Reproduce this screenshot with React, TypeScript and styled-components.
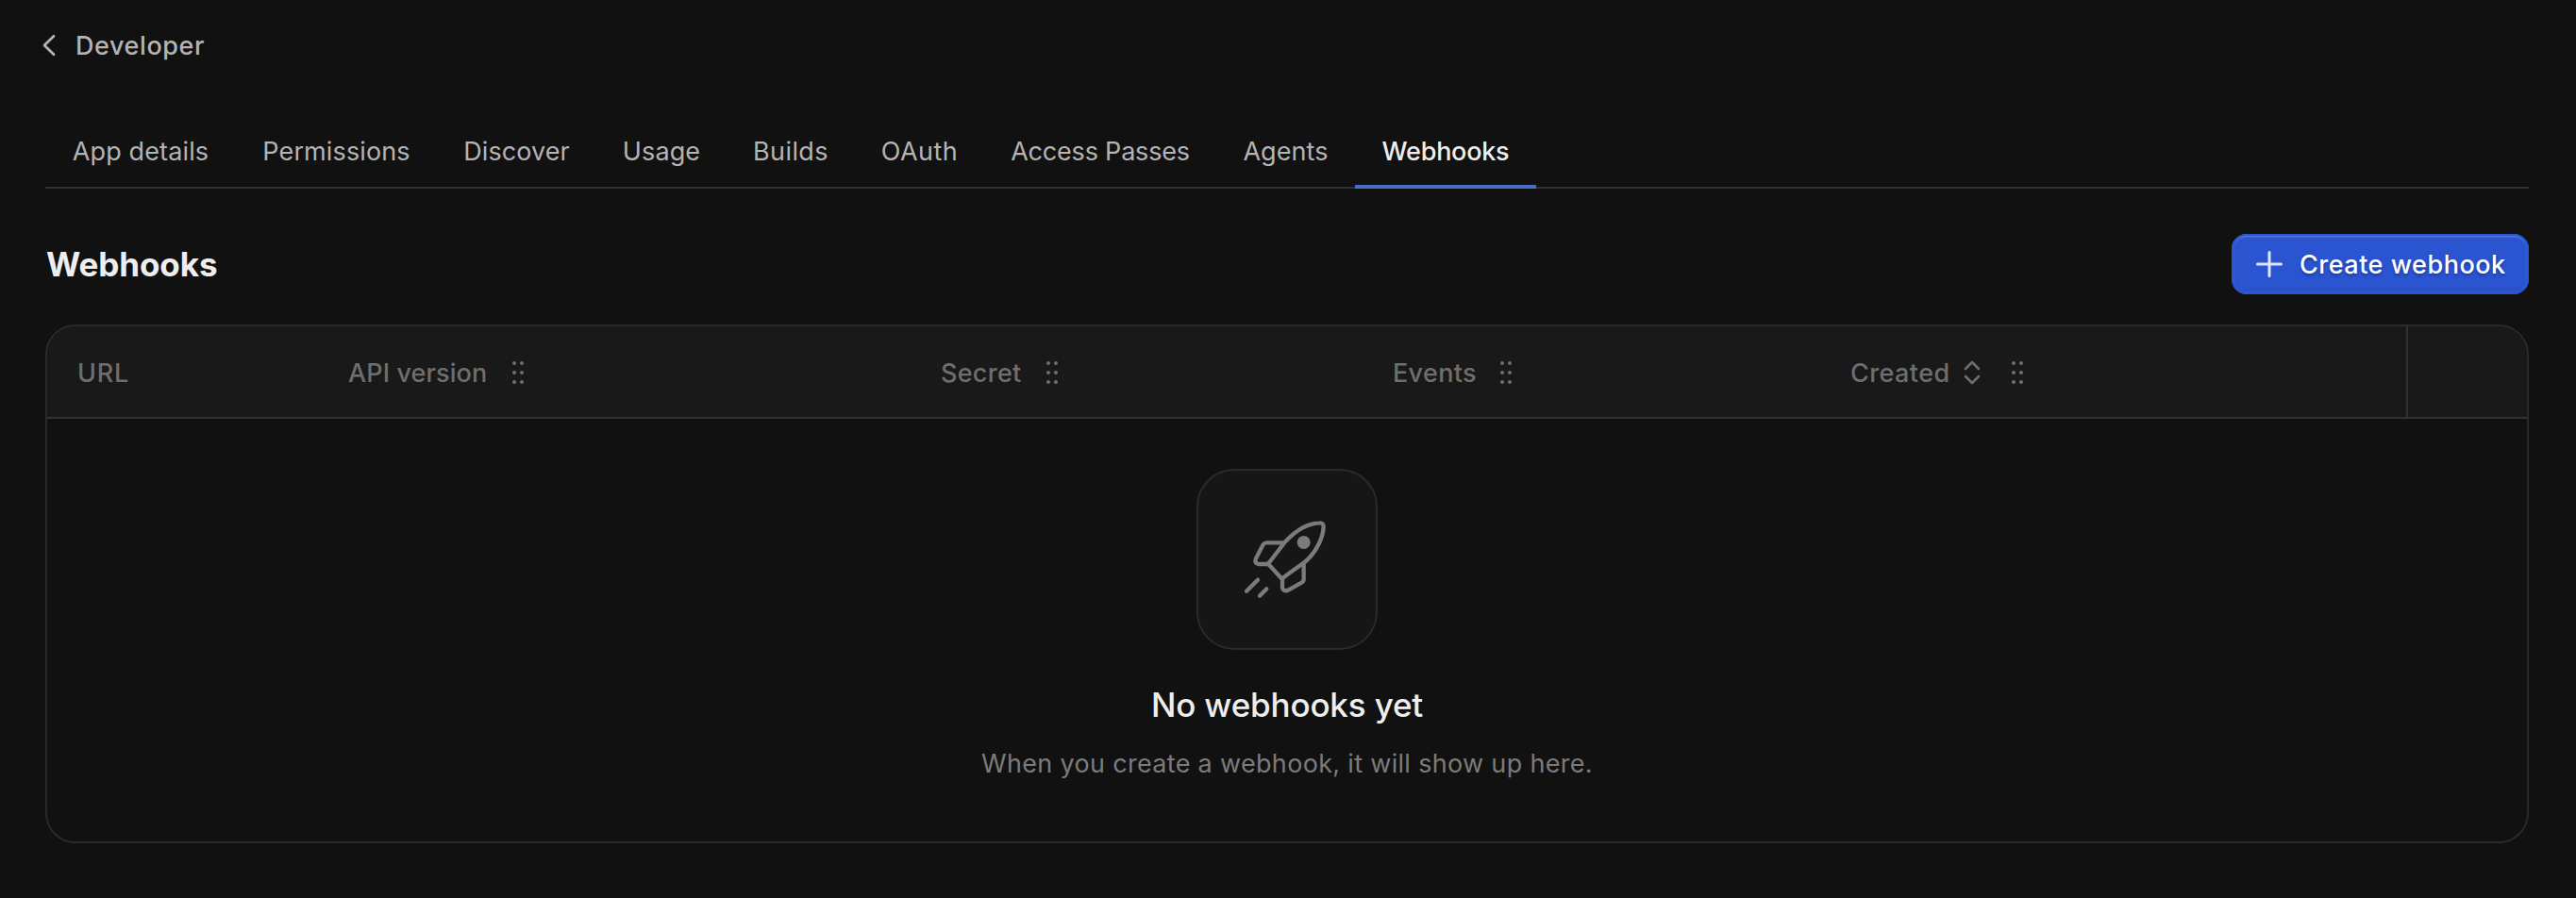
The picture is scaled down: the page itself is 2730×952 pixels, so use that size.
import React from 'react';
import styled, { createGlobalStyle } from 'styled-components';

const GlobalStyle = createGlobalStyle`
  * { box-sizing: border-box; }
  body {
    margin: 0;
    background: #111111;
    font-family: Inter, "Liberation Sans", sans-serif;
    font-size: 27px;
    line-height: 40px;
    color: #eeeeee;
  }
  svg { display: block; flex: none; }
`;

const Page = styled.main`
  display: flex;
  flex-direction: column;
  min-height: 952px;
  padding: 28px 50px 0 48px;
  background: #111111;
`;

const Label = styled.span`
  padding-top: 2px;
`;

const BackLink = styled.a`
  display: flex;
  align-items: center;
  align-self: flex-start;
  gap: 20px;
  height: 40px;
  margin-left: -4px;
  color: #b4b4b4;
  font-weight: 500;
  letter-spacing: 0.58px;
`;

const TabBar = styled.nav`
  display: flex;
  height: 80px;
  margin-top: 52px;
  box-shadow: inset 0 -2px 0 #313131;
`;

const Tab = styled.a<{ $width: number; $track: number; $active?: boolean }>`
  display: flex;
  justify-content: center;
  align-items: center;
  width: ${(p) => p.$width}px;
  white-space: nowrap;
  letter-spacing: ${(p) => p.$track}px;
  color: ${(p) => (p.$active ? '#eeeeee' : '#b4b4b4')};
  font-weight: ${(p) => (p.$active ? 500 : 400)};
  box-shadow: ${(p) => (p.$active ? 'inset 0 -4px 0 #4a6cc7' : 'none')};
`;

const SectionHeader = styled.header`
  display: flex;
  align-items: center;
  justify-content: space-between;
  height: 64px;
  margin-top: 48px;
`;

const Heading = styled.h1`
  margin: 0;
  padding-left: 1px;
  font-size: 35px;
  font-weight: 650;
  line-height: 48px;
  letter-spacing: -0.08px;
`;

const CreateButton = styled.button`
  display: flex;
  align-items: center;
  gap: 18px;
  width: 315px;
  height: 64px;
  padding: 0 0 0 26px;
  border: 0;
  border-radius: 16px;
  background: #2a54d0;
  box-shadow:
    inset 0 0 0 2px #2a54d0,
    inset 0 4px 2px -1px rgba(255, 255, 255, 0.24),
    inset 0 0 2px 3px rgba(255, 255, 255, 0.07),
    inset 0 -5px 4px -1px rgba(0, 0, 0, 0.08);
  color: #ffffff;
  font: inherit;
  font-weight: 500;
  letter-spacing: 0.5px;
  text-shadow: 0 2px 3px rgba(0, 0, 0, 0.3);
  white-space: nowrap;
`;

const TableCard = styled.section`
  height: 550px;
  margin-top: 32px;
  border: 2px solid #2a2a2a;
  border-radius: 32px;
  overflow: hidden;
`;

const HeaderRow = styled.div`
  display: flex;
  height: 98px;
  border-bottom: 2px solid #313131;
  background: #191919;
`;

const HeaderCell = styled.div<{ $width?: number; $track?: number }>`
  display: flex;
  align-items: center;
  flex: ${(p) => (p.$width ? `0 0 ${p.$width}px` : '1')};
  padding: 2px 0 0 32px;
  color: #6e6e6e;
  font-weight: 500;
  letter-spacing: ${(p) => p.$track ?? 0}px;
  white-space: nowrap;
`;

const ActionsCell = styled.div`
  width: 128px;
  border-left: 2px solid #313131;
`;

const Handle = styled.svg<{ $offset: number }>`
  margin-left: ${(p) => p.$offset}px;
`;

const SortMark = styled.svg`
  margin-left: 14px;
`;

const EmptyState = styled.div`
  display: flex;
  flex-direction: column;
  align-items: center;
  padding-top: 53px;
`;

const IconTile = styled.div`
  display: flex;
  align-items: center;
  justify-content: center;
  width: 192px;
  height: 192px;
  border: 2px solid #2a2a2a;
  border-radius: 40px;
  background: #161616;
`;

const EmptyTitle = styled.h2`
  margin: 34px 0 0;
  font-size: 35px;
  font-weight: 500;
  line-height: 48px;
  letter-spacing: -0.16px;
`;

const EmptyText = styled.p`
  margin: 19px 0 0;
  color: #7b7b7b;
  letter-spacing: 0.32px;
`;

const tabs = [
  { label: 'App details', width: 202, track: 0.12 },
  { label: 'Permissions', width: 213, track: 0.12 },
  { label: 'Discover', width: 169, track: 0.05 },
  { label: 'Usage', width: 138, track: 0.1 },
  { label: 'Builds', width: 136, track: 0.4 },
  { label: 'OAuth', width: 137, track: 0.45 },
  { label: 'Access Passes', width: 246, track: -0.2 },
  { label: 'Agents', width: 147, track: 0.09 },
  { label: 'Webhooks', width: 192, track: -0.25, active: true },
];

function DragHandle({ offset }: { offset: number }) {
  return (
    <Handle $offset={offset} width="12" height="24" viewBox="0 0 12 24" fill="#6e6e6e">
      {[2, 12, 22].map((y) => (
        <React.Fragment key={y}>
          <circle cx="2" cy={y} r="2" />
          <circle cx="10" cy={y} r="2" />
        </React.Fragment>
      ))}
    </Handle>
  );
}

function Rocket() {
  return (
    <svg width="96" height="96" viewBox="198 195 288 288" fill="none" stroke="#7b7b7b" strokeWidth="13" strokeLinecap="round" strokeLinejoin="round">
      <path d="M326 401L282 353C300 331 323 299 338 281C375 242 415 224 445 223Q458 222 458 236C457 265 440 307 407 340C391 355 355 376 326 401Z" />
      <path d="M331 286H277Q270 286 266 292L243 336Q237 353 252 354H282" />
      <path d="M395 352V403Q395 409 388 413L346 437Q329 443 327 428V401" />
      <path d="M249 404L213 440M277 433L255 455" />
      <circle cx="395" cy="285" r="21" fill="#7b7b7b" stroke="none" />
    </svg>
  );
}

export default function App() {
  return (
    <>
      <GlobalStyle />
      <Page>
        <BackLink>
          <svg width="16" height="24" viewBox="0 0 16 24" fill="none" stroke="#b4b4b4" strokeWidth="2.8" strokeLinecap="round" strokeLinejoin="round">
            <path d="M13 2.2L3 12L13 21.8" />
          </svg>
          <Label>Developer</Label>
        </BackLink>
        <TabBar>
          {tabs.map((t) => (
            <Tab key={t.label} $width={t.width} $track={t.track} $active={t.active}>
              <Label>{t.label}</Label>
            </Tab>
          ))}
        </TabBar>
        <SectionHeader>
          <Heading>Webhooks</Heading>
          <CreateButton>
            <svg width="28" height="28" viewBox="0 0 28 28" stroke="#ffffff" strokeOpacity="0.85" strokeWidth="3" strokeLinecap="round">
              <path d="M14 1.5V26.5M1.5 14H26.5" />
            </svg>
            <Label>Create webhook</Label>
          </CreateButton>
        </SectionHeader>
        <TableCard>
          <HeaderRow>
            <HeaderCell $width={287} $track={0.8}>
              <Label>URL</Label>
            </HeaderCell>
            <HeaderCell $width={628} $track={0.1}>
              <Label>API version</Label>
              <DragHandle offset={27} />
            </HeaderCell>
            <HeaderCell $width={479} $track={0.27}>
              <Label>Secret</Label>
              <DragHandle offset={27} />
            </HeaderCell>
            <HeaderCell $width={485} $track={0.33}>
              <Label>Events</Label>
              <DragHandle offset={25} />
            </HeaderCell>
            <HeaderCell $track={0.42}>
              <Label>Created</Label>
              <SortMark width="18" height="26" viewBox="0 0 18 26" fill="none" stroke="#6e6e6e" strokeWidth="2.6" strokeLinecap="round" strokeLinejoin="round">
                <path d="M2 9L9 2L16 9M2 17L9 24L16 17" />
              </SortMark>
              <DragHandle offset={33} />
            </HeaderCell>
            <ActionsCell />
          </HeaderRow>
          <EmptyState>
            <IconTile>
              <Rocket />
            </IconTile>
            <EmptyTitle>No webhooks yet</EmptyTitle>
            <EmptyText>When you create a webhook, it will show up here.</EmptyText>
          </EmptyState>
        </TableCard>
      </Page>
    </>
  );
}
